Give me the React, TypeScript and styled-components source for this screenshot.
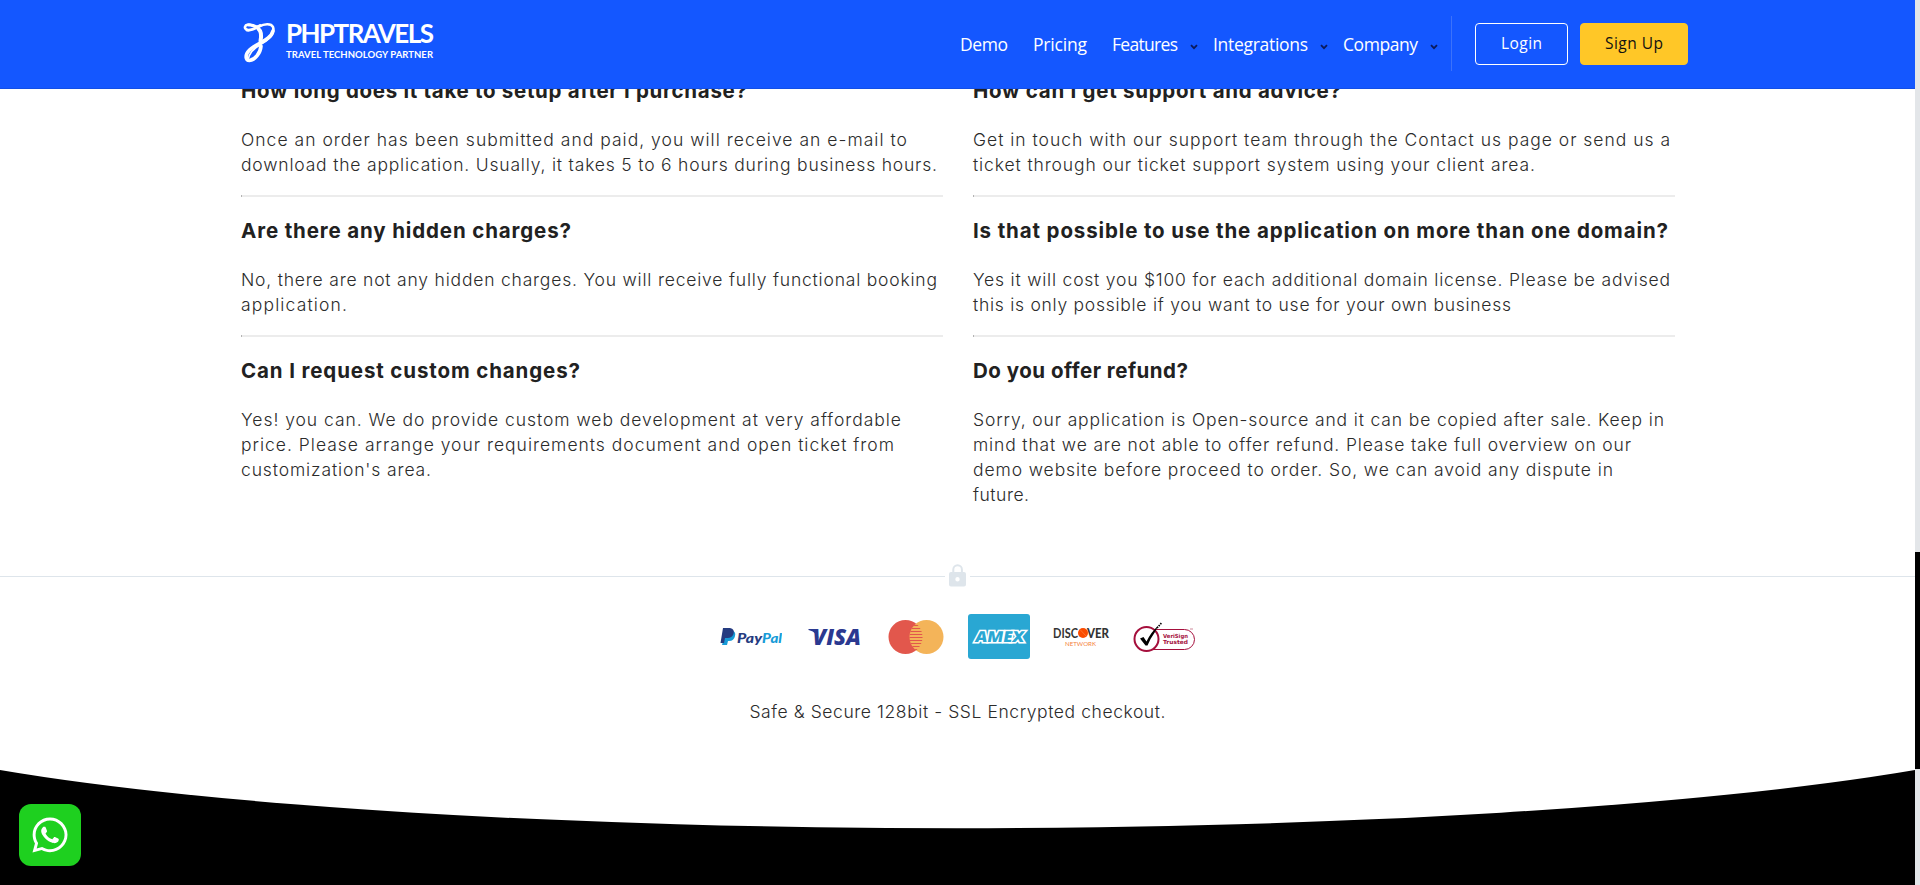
import React, { useLayoutEffect, useRef, useState } from "react";
import styled, { createGlobalStyle } from "styled-components";
import { FaWhatsapp } from "react-icons/fa";

const Global = createGlobalStyle`
  * { box-sizing: border-box; }
  html, body { margin: 0; height: 885px; overflow: hidden; background: #fff; }
  body { font-family: Inter, "Liberation Sans", sans-serif; color: #212121; }
`;

const Page = styled.div`
  width: 1920px;
  height: 885px;
  overflow: hidden;
  display: flex;
`;
const Content = styled.div`
  width: 1915px;
  height: 885px;
  display: flex;
  flex-direction: column;
`;
const ScrollTrack = styled.div`
  width: 5px;
  height: 885px;
  padding-top: 552px;
  background: #e3e6e9;
`;
const ScrollThumb = styled.div`
  height: 217px;
  background: #000;
`;

const Header = styled.header`
  position: fixed;
  z-index: 2;
  top: 0;
  left: 0;
  width: 1915px;
  height: 89px;
  padding: 0 227px 0 243px;
  display: flex;
  justify-content: space-between;
  background: #1457ff;
  border-bottom: 1px solid #124fe6;
`;
const Logo = styled.a`
  display: flex;
  gap: 10px;
  padding-top: 22px;
  color: #fff;
`;
const LogoWords = styled.div`
  display: flex;
  flex-direction: column;
`;
const LogoName = styled.div`
  height: 25px;
  font: 700 26px/22px Lato, sans-serif;
`;
const LogoTag = styled.div`
  font: 700 9.5px/16px Lato, sans-serif;
`;
const Nav = styled.nav`
  display: flex;
  align-items: flex-start;
  font-family: "Open Sans", sans-serif;
`;
const NavItem = styled.a<{ $gap: number }>`
  display: flex;
  height: 88px;
  align-items: center;
  margin-right: ${(p) => p.$gap}px;
  color: #fff;
  font-size: 17.5px;
  line-height: 24px;
  svg { margin: 5px 0 0 12px; }
`;
const Separator = styled.div`
  width: 1px;
  height: 55px;
  margin: 16px 23px 0 0;
  background: #3c72fa;
`;
const Button = styled.a<{ $solid?: boolean }>`
  display: flex;
  justify-content: center;
  width: ${(p) => (p.$solid ? 108 : 93)}px;
  height: 42px;
  margin: 23px ${(p) => (p.$solid ? 0 : 12)}px 0 0;
  padding-top: 8px;
  border: 1px solid ${(p) => (p.$solid ? "#ffc727" : "#fff")};
  border-radius: 4px;
  background: ${(p) => (p.$solid ? "#ffc727" : "transparent")};
  color: ${(p) => (p.$solid ? "#111" : "#fff")};
  font-size: 15.5px;
  line-height: 23px;
`;

const Faq = styled.main`
  display: grid;
  grid-template-columns: 702px 702px;
  column-gap: 30px;
  height: 519px;
  padding: 57px 0 0 241px;
`;
const Column = styled.section`
  display: flex;
  flex-direction: column;
`;
const Item = styled.article`
  padding-top: 19px;
`;
const Divider = styled.div`
  height: 2px;
  margin-top: 18px;
  border-left: 1px solid #b4b4b4;
  background: #ececec;
`;
const Question = styled.h3`
  margin: 0 0 21px;
  font-size: 20.5px;
  font-weight: 700;
  line-height: 30px;
  color: #212121;
`;
const Answer = styled.p`
  margin: 0;
  font-size: 17.5px;
  font-weight: 300;
  line-height: 25px;
  color: #2b2b2b;
`;
const Line = styled.span`
  display: block;
  width: max-content;
  white-space: nowrap;
`;

const Secure = styled.section`
  display: flex;
  flex-direction: column;
  align-items: center;
  height: 251px;
  padding-top: 44px;
`;
const LockRow = styled.div`
  display: flex;
  align-items: center;
  width: 100%;
  height: 26px;
`;
const Rule = styled.div`
  flex: 1;
  height: 1px;
  background: #dee5eb;
`;
const Cards = styled.div`
  display: flex;
  gap: 20.6px;
  margin-top: 25px;
  svg { display: block; }
`;
const SafeText = styled.p`
  margin: 40px 0 0;
  font-size: 17.5px;
  font-weight: 300;
  line-height: 25px;
  color: #2b2b2b;
`;
const Footer = styled.footer`
  height: 115px;
  background: #000;
  svg { display: block; }
`;
const Chat = styled.a`
  position: fixed;
  z-index: 2;
  left: 19px;
  top: 804px;
  display: flex;
  align-items: center;
  justify-content: center;
  width: 62px;
  height: 62px;
  border-radius: 12px;
  background: #1ed01f;
  color: #fff;
`;

/* One line of text, tracked so that it spans the given width. */
function Fit({ text, w }: { text: string; w: number }) {
  const ref = useRef<HTMLSpanElement>(null);
  const [spacing, setSpacing] = useState(0);
  useLayoutEffect(() => {
    if (ref.current) {
      const natural = ref.current.getBoundingClientRect().width;
      setSpacing((w - natural) / (text.length - 1));
    }
  }, [text, w]);
  return <Line ref={ref} style={{ letterSpacing: spacing, marginRight: -spacing }}>{text}</Line>;
}

type Row = [string, number];
const columns: { q: Row; a: Row[] }[][] = [
  [
    { q: ["How long does it take to setup after I purchase?", 506], a: [
      ["Once an order has been submitted and paid, you will receive an e-mail to", 666],
      ["download the application. Usually, it takes 5 to 6 hours during business hours.", 696]] },
    { q: ["Are there any hidden charges?", 330], a: [
      ["No, there are not any hidden charges. You will receive fully functional booking", 696],
      ["application.", 106]] },
    { q: ["Can I request custom changes?", 339], a: [
      ["Yes! you can. We do provide custom web development at very affordable", 660],
      ["price. Please arrange your requirements document and open ticket from", 653],
      ["customization's area.", 190]] },
  ],
  [
    { q: ["How can I get support and advice?", 368], a: [
      ["Get in touch with our support team through the Contact us page or send us a", 697],
      ["ticket through our ticket support system using your client area.", 562]] },
    { q: ["Is that possible to use the application on more than one domain?", 695], a: [
      ["Yes it will cost you $100 for each additional domain license. Please be advised", 697],
      ["this is only possible if you want to use for your own business", 538]] },
    { q: ["Do you offer refund?", 215], a: [
      ["Sorry, our application is Open-source and it can be copied after sale. Keep in", 691],
      ["mind that we are not able to offer refund. Please take full overview on our", 658],
      ["demo website before proceed to order. So, we can avoid any dispute in", 640],
      ["future.", 56]] },
  ],
];

const Chevron = () => (
  <svg width="8" height="6" viewBox="0 0 8 6" fill="none" stroke="#0b1a5c" strokeWidth="1.8">
    <path d="M1 1.2 4 4.2 7 1.2" />
  </svg>
);

const LogoMark = () => (
  <svg width="33" height="41" viewBox="0 0 33 41" fill="none" stroke="#fff" strokeLinecap="round" strokeLinejoin="round">
    <path d="M3.500 7.500C1 6 1.500 3.200 5 2.600 10 1.700 11 7 16 4.500 21 2 28 1 30 5 32 10 26 17 19 21" strokeWidth="2.600" />
    <path d="M4 8C9 9 13 5.500 17 3.500M6 3C9 2.500 12 4 14 5" strokeWidth="3" />
    <path d="M15.500 7C18 9 18.500 14 17.500 19" strokeWidth="4" />
    <path d="M30 9C28 18 14 21 6.500 28 1.500 33 2.500 38.500 6.500 38.500 12 38 17.500 31 18 24" strokeWidth="3.600" />
    <path d="M18 22.500C11 26 6 32 5 38" strokeWidth="1.700" />
  </svg>
);

const PayPal = () => (
  <svg width="62" height="45" viewBox="0 0 62 45">
    <path d="M5 17h7q3 1 2 5-1 5-6 5H7l-1 4H1z" transform="translate(1 0)" fill="#179bd7" />
    <path d="M3 14h7q5 1 3.500 6-1.500 4-6 4H5l-1 5H.5z" fill="#253b80" />
    <g fontFamily="Lato, sans-serif" fontSize="13.500" fontWeight="900" fontStyle="italic">
      <text x="17" y="29" fill="#253b80" textLength="25" lengthAdjust="spacingAndGlyphs">Pay</text>
      <text x="42" y="29" fill="#179bd7" textLength="20" lengthAdjust="spacingAndGlyphs">Pal</text>
    </g>
  </svg>
);
const Visa = () => (
  <svg width="62" height="45" viewBox="0 0 62 45">
    <path d="M5.500 15h6q2 0 2.500 3l1.500 6-3-4q-2-3-7-4z" fill="#2b3990" />
    <text x="9.500" y="31" fill="#2b3990" fontFamily="Open Sans, sans-serif" fontSize="22.500" fontWeight="800" fontStyle="italic" textLength="48.500" lengthAdjust="spacingAndGlyphs">VISA</text>
  </svg>
);
const MasterCard = () => (
  <svg width="62" height="45" viewBox="0 0 62 45">
    <circle cx="20.500" cy="23" r="17" fill="#e2574c" />
    <circle cx="41.500" cy="23" r="17" fill="#f4b459" />
    <clipPath id="overlap"><path d="M31 9.600A17 17 0 0 1 31 36.400A17 17 0 0 1 31 9.600" /></clipPath>
    <path clipPath="url(#overlap)" d="M24 11.500h14M24 14.500h14M24 17.500h14M24 20.500h14M24 23.500h14M24 26.500h14M24 29.500h14M24 32.500h14M24 35.500h14" stroke="#e2574c" strokeWidth="1.200" />
  </svg>
);
const Amex = () => (
  <svg width="62" height="45" viewBox="0 0 62 45">
    <rect width="62" height="45" rx="3" fill="#29a7d3" />
    <text x="6" y="28" fill="#29a7d3" stroke="#fff" strokeWidth="3" paintOrder="stroke" strokeLinejoin="miter" fontFamily="Open Sans, sans-serif" fontSize="15" fontWeight="800" textLength="49" lengthAdjust="spacingAndGlyphs" transform="translate(5.500 0) skewX(-10)">AMEX</text>
  </svg>
);
const Discover = () => (
  <svg width="62" height="45" viewBox="0 0 62 45">
    <g fill="#333" fontFamily="Lato, sans-serif" fontSize="13.500" fontWeight="700">
      <text x="3" y="24" textLength="25" lengthAdjust="spacingAndGlyphs">DISC</text>
      <text x="37" y="24" fontWeight="900" textLength="22" lengthAdjust="spacingAndGlyphs">VER</text>
    </g>
    <circle cx="33" cy="19" r="5" fill="#fa4b00" />
    <path d="M30 15.500 36 22" stroke="#ff8c45" strokeWidth=".6" />
    <text x="15" y="32" fill="#f5823c" fontFamily="Lato, sans-serif" fontSize="6.500" textLength="31" lengthAdjust="spacingAndGlyphs">NETWORK</text>
  </svg>
);
const VeriSign = () => (
  <svg width="62" height="45" viewBox="0 0 62 45">
    <path d="M20 15.500H51.500A10 10 0 0 1 51.500 35.500H20" fill="none" stroke="#a50f3c" strokeWidth="1" />
    <circle cx="13.500" cy="25" r="12" fill="#fff" stroke="#a50f3c" strokeWidth="2" />
    <path d="M7 24.500 10.500 23 13.500 27.500Q18 18 25 12L22 18Q17 25 14.500 31.500H12.500Z" fill="#000" />
    <path d="M24 14 29 8.500" stroke="#000" strokeWidth="1.700" strokeDasharray="1.500 1" />
    <g fill="#a50f3c" fontFamily="DejaVu Sans, sans-serif" fontWeight="700" fontSize="5.600">
      <text x="30" y="24" textLength="25" lengthAdjust="spacingAndGlyphs">VeriSign</text>
      <text x="30" y="30" textLength="25" lengthAdjust="spacingAndGlyphs">Trusted</text>
    </g>
    <path d="M57 15h3" stroke="#c06b80" strokeWidth=".8" />
  </svg>
);

export default function App() {
  return (
    <>
      <Global />
      <Page>
        <Content>
          <Header>
            <Logo>
              <LogoMark />
              <LogoWords>
                <LogoName><Fit text="PHPTRAVELS" w={148} /></LogoName>
                <LogoTag><Fit text="TRAVEL TECHNOLOGY PARTNER" w={147} /></LogoTag>
              </LogoWords>
            </Logo>
            <Nav>
              <NavItem $gap={25}><Fit text="Demo" w={48} /></NavItem>
              <NavItem $gap={25}><Fit text="Pricing" w={54} /></NavItem>
              <NavItem $gap={15}><Fit text="Features" w={66} /><Chevron /></NavItem>
              <NavItem $gap={15}><Fit text="Integrations" w={95} /><Chevron /></NavItem>
              <NavItem $gap={13}><Fit text="Company" w={75} /><Chevron /></NavItem>
              <Separator />
              <Button><Fit text="Login" w={41} /></Button>
              <Button $solid><Fit text="Sign Up" w={58} /></Button>
            </Nav>
          </Header>
          <Faq>
            {columns.map((items, i) => (
              <Column key={i}>
                {items.map(({ q, a }, n) => (
                  <Item key={q[0]}>
                    <Question><Fit text={q[0]} w={q[1]} /></Question>
                    <Answer>{a.map(([t, w]) => <Fit key={t} text={t} w={w} />)}</Answer>
                    {n < items.length - 1 && <Divider />}
                  </Item>
                ))}
              </Column>
            ))}
          </Faq>
          <Secure>
            <LockRow>
              <Rule />
              <svg width="25" height="26" viewBox="0 0 25 26">
                <path d="M8.300 10V6.500a4.300 4.300 0 0 1 8.600 0V10" fill="none" stroke="#dee5eb" strokeWidth="2" />
                <path fillRule="evenodd" d="M6 9h13q2 0 2 2v10.500q0 2-2 2H6q-2 0-2-2V11q0-2 2-2Zm6.500 5a2.200 2.200 0 1 0 0 4.400 2.200 2.200 0 0 0 0-4.400Z" fill="#dee5eb" />
              </svg>
              <Rule />
            </LockRow>
            <Cards>
              <PayPal /><Visa /><MasterCard /><Amex /><Discover /><VeriSign />
            </Cards>
            <SafeText><Fit text="Safe & Secure 128bit - SSL Encrypted checkout." w={416} /></SafeText>
          </Secure>
          <Footer>
            <svg width="1915" height="60" viewBox="0 0 1915 60">
              <path d="M0 0A1149 130 0 0 0 1915 0Z" fill="#fff" />
            </svg>
          </Footer>
        </Content>
        <ScrollTrack><ScrollThumb /></ScrollTrack>
      </Page>
      <Chat><FaWhatsapp size={40} /></Chat>
    </>
  );
}
